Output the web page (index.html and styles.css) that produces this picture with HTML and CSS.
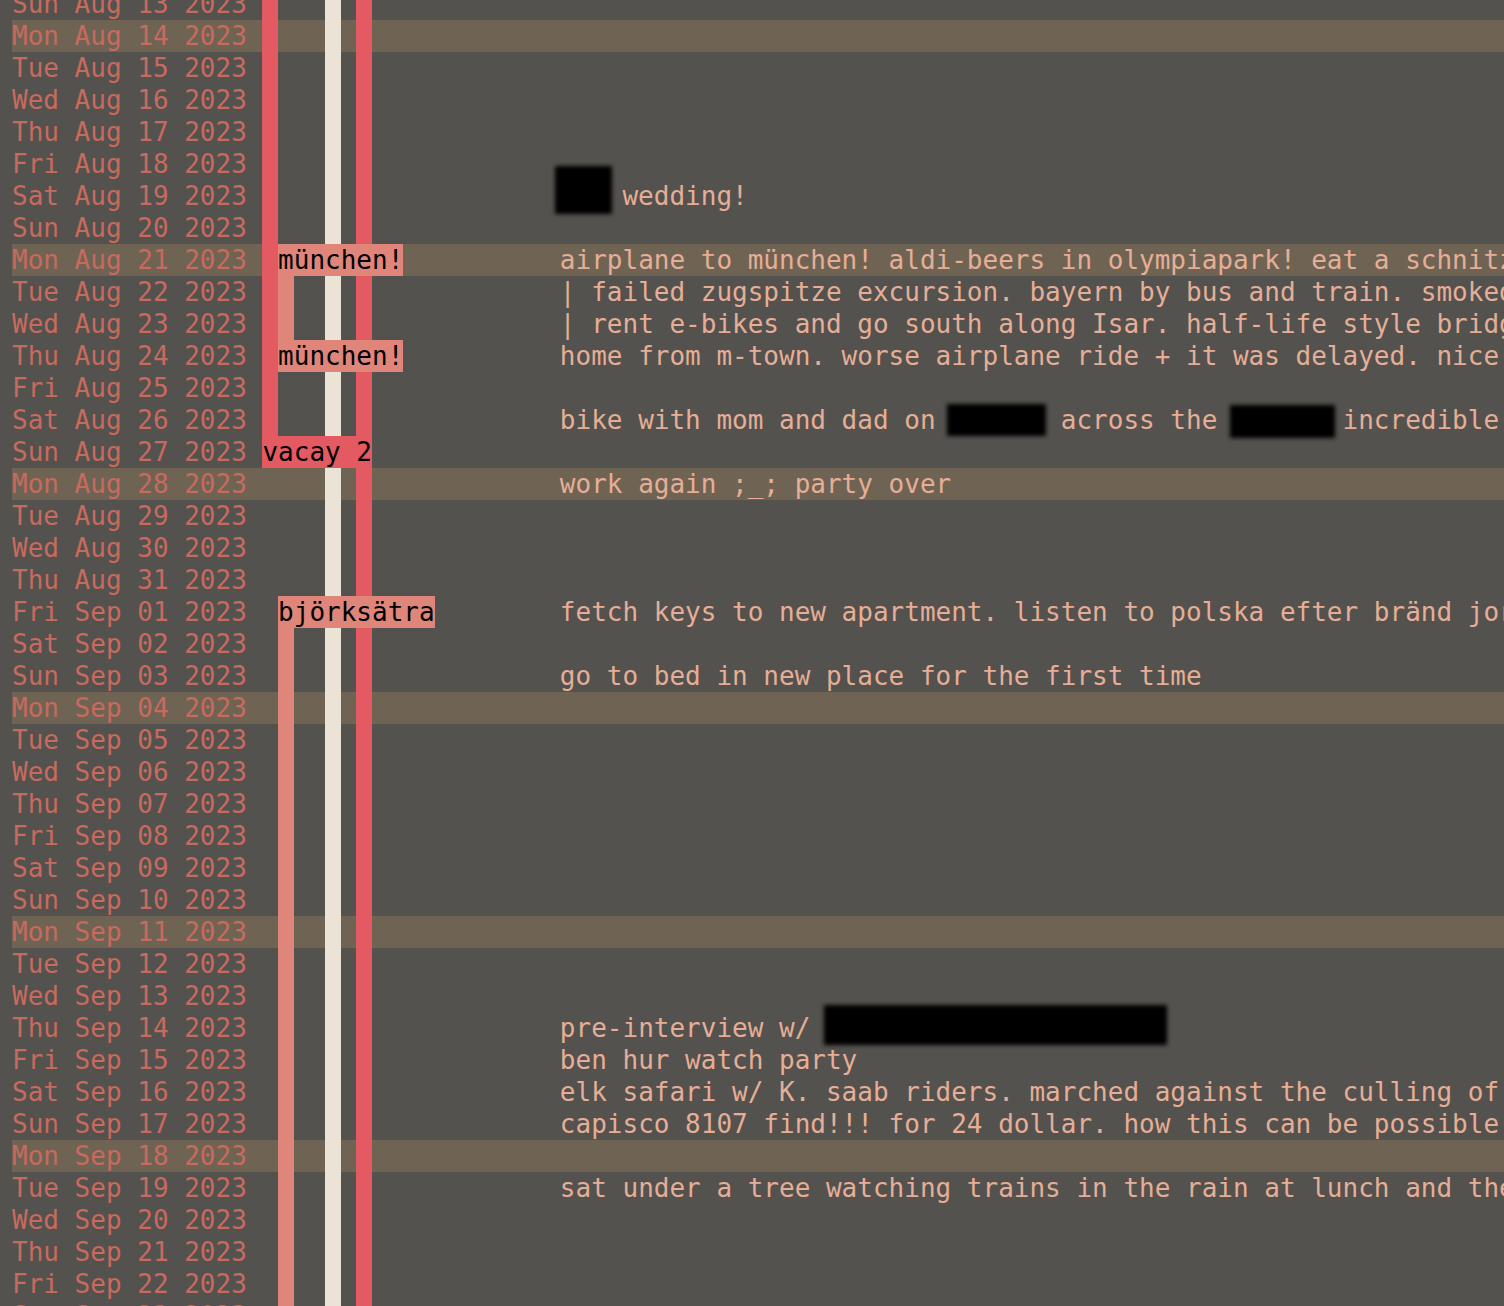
FILE: index.html
```html
<!DOCTYPE html>
<html>
<head>
<meta charset="utf-8">
<title>log</title>
<link rel="stylesheet" href="styles.css">
</head>
<body>
<div class="log">
<div class="row"><span class="date">Sun Aug 13 2023</span><div class="track"><i class="bar red b16"></i><i class="bar cream b20"></i><i class="bar red b22"></i></div><span class="desc"></span></div>
<div class="row hl"><span class="date">Mon Aug 14 2023</span><div class="track"><i class="bar red b16"></i><i class="bar cream b20"></i><i class="bar red b22"></i></div><span class="desc"></span></div>
<div class="row"><span class="date">Tue Aug 15 2023</span><div class="track"><i class="bar red b16"></i><i class="bar cream b20"></i><i class="bar red b22"></i></div><span class="desc"></span></div>
<div class="row"><span class="date">Wed Aug 16 2023</span><div class="track"><i class="bar red b16"></i><i class="bar cream b20"></i><i class="bar red b22"></i></div><span class="desc"></span></div>
<div class="row"><span class="date">Thu Aug 17 2023</span><div class="track"><i class="bar red b16"></i><i class="bar cream b20"></i><i class="bar red b22"></i></div><span class="desc"></span></div>
<div class="row"><span class="date">Fri Aug 18 2023</span><div class="track"><i class="bar red b16"></i><i class="bar cream b20"></i><i class="bar red b22"></i></div><span class="desc"></span></div>
<div class="row"><span class="date">Sat Aug 19 2023</span><div class="track"><i class="bar red b16"></i><i class="bar cream b20"></i><i class="bar red b22"></i></div><span class="desc"><span class="redact w3 r1"></span> wedding!</span></div>
<div class="row"><span class="date">Sun Aug 20 2023</span><div class="track"><i class="bar red b16"></i><i class="bar cream b20"></i><i class="bar red b22"></i></div><span class="desc"></span></div>
<div class="row hl"><span class="date">Mon Aug 21 2023</span><div class="track"><i class="bar red b16"></i><i class="bar cream b20"></i><i class="bar red b22"></i><span class="lab sal l-m">münchen!</span></div><span class="desc">airplane to münchen! aldi-beers in olympiapark! eat a schnitzel</span></div>
<div class="row"><span class="date">Tue Aug 22 2023</span><div class="track"><i class="bar red b16"></i><i class="bar sal b17"></i><i class="bar cream b20"></i><i class="bar red b22"></i></div><span class="desc">| failed zugspitze excursion. bayern by bus and train. smoked</span></div>
<div class="row"><span class="date">Wed Aug 23 2023</span><div class="track"><i class="bar red b16"></i><i class="bar sal b17"></i><i class="bar cream b20"></i><i class="bar red b22"></i></div><span class="desc">| rent e-bikes and go south along Isar. half-life style bridge</span></div>
<div class="row"><span class="date">Thu Aug 24 2023</span><div class="track"><i class="bar red b16"></i><i class="bar cream b20"></i><i class="bar red b22"></i><span class="lab sal l-m">münchen!</span></div><span class="desc">home from m-town. worse airplane ride + it was delayed. nice</span></div>
<div class="row"><span class="date">Fri Aug 25 2023</span><div class="track"><i class="bar red b16"></i><i class="bar cream b20"></i><i class="bar red b22"></i></div><span class="desc"></span></div>
<div class="row"><span class="date">Sat Aug 26 2023</span><div class="track"><i class="bar red b16"></i><i class="bar cream b20"></i><i class="bar red b22"></i></div><span class="desc">bike with mom and dad on <span class="redact w6 r2"></span> across the <span class="redact w6 r3"></span> incredible</span></div>
<div class="row"><span class="date">Sun Aug 27 2023</span><div class="track"><i class="bar cream b20"></i><span class="lab red l-v">vacay 2</span></div><span class="desc"></span></div>
<div class="row hl"><span class="date">Mon Aug 28 2023</span><div class="track"><i class="bar cream b20"></i><i class="bar red b22"></i></div><span class="desc">work again ;_; party over</span></div>
<div class="row"><span class="date">Tue Aug 29 2023</span><div class="track"><i class="bar cream b20"></i><i class="bar red b22"></i></div><span class="desc"></span></div>
<div class="row"><span class="date">Wed Aug 30 2023</span><div class="track"><i class="bar cream b20"></i><i class="bar red b22"></i></div><span class="desc"></span></div>
<div class="row"><span class="date">Thu Aug 31 2023</span><div class="track"><i class="bar cream b20"></i><i class="bar red b22"></i></div><span class="desc"></span></div>
<div class="row"><span class="date">Fri Sep 01 2023</span><div class="track"><i class="bar cream b20"></i><i class="bar red b22"></i><span class="lab sal l-b">björksätra</span></div><span class="desc">fetch keys to new apartment. listen to polska efter bränd jord</span></div>
<div class="row"><span class="date">Sat Sep 02 2023</span><div class="track"><i class="bar sal b17"></i><i class="bar cream b20"></i><i class="bar red b22"></i></div><span class="desc"></span></div>
<div class="row"><span class="date">Sun Sep 03 2023</span><div class="track"><i class="bar sal b17"></i><i class="bar cream b20"></i><i class="bar red b22"></i></div><span class="desc">go to bed in new place for the first time</span></div>
<div class="row hl"><span class="date">Mon Sep 04 2023</span><div class="track"><i class="bar sal b17"></i><i class="bar cream b20"></i><i class="bar red b22"></i></div><span class="desc"></span></div>
<div class="row"><span class="date">Tue Sep 05 2023</span><div class="track"><i class="bar sal b17"></i><i class="bar cream b20"></i><i class="bar red b22"></i></div><span class="desc"></span></div>
<div class="row"><span class="date">Wed Sep 06 2023</span><div class="track"><i class="bar sal b17"></i><i class="bar cream b20"></i><i class="bar red b22"></i></div><span class="desc"></span></div>
<div class="row"><span class="date">Thu Sep 07 2023</span><div class="track"><i class="bar sal b17"></i><i class="bar cream b20"></i><i class="bar red b22"></i></div><span class="desc"></span></div>
<div class="row"><span class="date">Fri Sep 08 2023</span><div class="track"><i class="bar sal b17"></i><i class="bar cream b20"></i><i class="bar red b22"></i></div><span class="desc"></span></div>
<div class="row"><span class="date">Sat Sep 09 2023</span><div class="track"><i class="bar sal b17"></i><i class="bar cream b20"></i><i class="bar red b22"></i></div><span class="desc"></span></div>
<div class="row"><span class="date">Sun Sep 10 2023</span><div class="track"><i class="bar sal b17"></i><i class="bar cream b20"></i><i class="bar red b22"></i></div><span class="desc"></span></div>
<div class="row hl"><span class="date">Mon Sep 11 2023</span><div class="track"><i class="bar sal b17"></i><i class="bar cream b20"></i><i class="bar red b22"></i></div><span class="desc"></span></div>
<div class="row"><span class="date">Tue Sep 12 2023</span><div class="track"><i class="bar sal b17"></i><i class="bar cream b20"></i><i class="bar red b22"></i></div><span class="desc"></span></div>
<div class="row"><span class="date">Wed Sep 13 2023</span><div class="track"><i class="bar sal b17"></i><i class="bar cream b20"></i><i class="bar red b22"></i></div><span class="desc"></span></div>
<div class="row"><span class="date">Thu Sep 14 2023</span><div class="track"><i class="bar sal b17"></i><i class="bar cream b20"></i><i class="bar red b22"></i></div><span class="desc">pre-interview w/ <span class="redact w22 r4"></span></span></div>
<div class="row"><span class="date">Fri Sep 15 2023</span><div class="track"><i class="bar sal b17"></i><i class="bar cream b20"></i><i class="bar red b22"></i></div><span class="desc">ben hur watch party</span></div>
<div class="row"><span class="date">Sat Sep 16 2023</span><div class="track"><i class="bar sal b17"></i><i class="bar cream b20"></i><i class="bar red b22"></i></div><span class="desc">elk safari w/ K. saab riders. marched against the culling of the</span></div>
<div class="row"><span class="date">Sun Sep 17 2023</span><div class="track"><i class="bar sal b17"></i><i class="bar cream b20"></i><i class="bar red b22"></i></div><span class="desc">capisco 8107 find!!! for 24 dollar. how this can be possible</span></div>
<div class="row hl"><span class="date">Mon Sep 18 2023</span><div class="track"><i class="bar sal b17"></i><i class="bar cream b20"></i><i class="bar red b22"></i></div><span class="desc"></span></div>
<div class="row"><span class="date">Tue Sep 19 2023</span><div class="track"><i class="bar sal b17"></i><i class="bar cream b20"></i><i class="bar red b22"></i></div><span class="desc">sat under a tree watching trains in the rain at lunch and then</span></div>
<div class="row"><span class="date">Wed Sep 20 2023</span><div class="track"><i class="bar sal b17"></i><i class="bar cream b20"></i><i class="bar red b22"></i></div><span class="desc"></span></div>
<div class="row"><span class="date">Thu Sep 21 2023</span><div class="track"><i class="bar sal b17"></i><i class="bar cream b20"></i><i class="bar red b22"></i></div><span class="desc"></span></div>
<div class="row"><span class="date">Fri Sep 22 2023</span><div class="track"><i class="bar sal b17"></i><i class="bar cream b20"></i><i class="bar red b22"></i></div><span class="desc"></span></div>
<div class="row"><span class="date">Sat Sep 23 2023</span><div class="track"><i class="bar sal b17"></i><i class="bar cream b20"></i><i class="bar red b22"></i></div><span class="desc"></span></div>
</div>
</body>
</html>
```
FILE: styles.css
```css
html, body {
  margin: 0;
  padding: 0;
  background: #53524e;
  height: 1306px;
  overflow: hidden;
}

.log {
  margin-top: -12px;
  font-family: "DejaVu Sans Mono", "Liberation Mono", monospace;
  font-size: 26px;
  line-height: 32px;
}

.row {
  display: grid;
  grid-template-columns: 16ch 19ch 1fr;
  height: 32px;
  margin-left: 12px;
}

.row.hl {
  background: #6f6453;
}

.date {
  color: #c86a5e;
  white-space: pre;
}

.track {
  display: grid;
  grid-template-columns: repeat(19, 1ch);
  grid-template-rows: 32px;
}

.bar {
  display: block;
  grid-row: 1;
  height: 32px;
}

.b16 { grid-column: 1; }
.b17 { grid-column: 2; }
.b20 { grid-column: 5; }
.b22 { grid-column: 7; }

.red { background: #e35a62; }
.sal { background: #e0857a; }
.cream { background: #ebe3d6; }

.lab {
  grid-row: 1;
  color: #000;
  white-space: pre;
  height: 32px;
}

.l-m { grid-column: 2 / span 8; }
.l-v { grid-column: 1 / span 7; }
.l-b { grid-column: 2 / span 10; }

.desc {
  color: #e6ae96;
  white-space: pre;
  overflow-x: clip;
  overflow-y: visible;
  position: relative;
  z-index: 1;
  margin-left: -12px;
  padding-left: 12px;
}

.redact {
  display: inline-block;
  position: relative;
  height: 32px;
  vertical-align: top;
}

.w3 { width: 3ch; }
.w6 { width: 6ch; }
.w22 { width: 22ch; }

.redact::before {
  content: "";
  position: absolute;
  top: var(--t);
  right: var(--r);
  bottom: var(--b);
  left: var(--l);
  background: #000;
  filter: blur(2px);
}

.r1 { --t: -14px; --r: -5px; --b: -2px; --l: -5px; }
.r2 { --t: 0px; --r: -1px; --b: 0px; --l: -4px; }
.r3 { --t: 1px; --r: -8px; --b: -2px; --l: -3px; }
.r4 { --t: -7px; --r: 3px; --b: -1px; --l: -2px; }
```
